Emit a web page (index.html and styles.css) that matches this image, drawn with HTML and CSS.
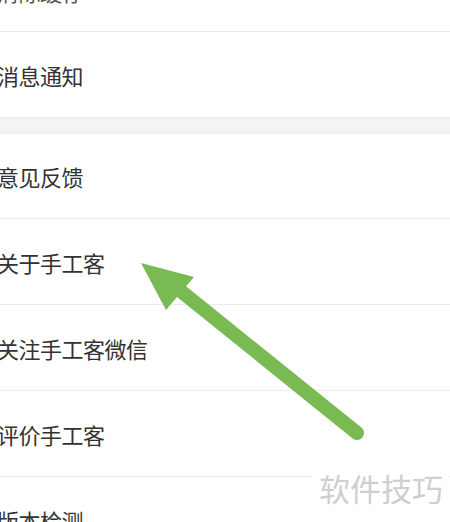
FILE: index.html
```html
<!DOCTYPE html>
<html lang="zh">
<head>
<meta charset="utf-8">
<link rel="stylesheet" href="styles.css">
</head>
<body>
<div class="page">
  <div class="row row-top">
    <span class="label">清除缓存</span>
    <span class="value">0.00M</span>
  </div>
  <div class="row">
    <span class="label">消息通知</span>
    <span class="chev"></span>
  </div>
  <div class="gap"></div>
  <div class="row">
    <span class="label">意见反馈</span>
    <span class="chev"></span>
  </div>
  <div class="row">
    <span class="label">关于手工客</span>
    <span class="chev"></span>
  </div>
  <div class="row">
    <span class="label">关注手工客微信</span>
    <span class="chev"></span>
  </div>
  <div class="row">
    <span class="label">评价手工客</span>
    <span class="chev"></span>
  </div>
  <div class="row row-last">
    <span class="label">版本检测</span>
    <span class="chev"></span>
  </div>

  <svg class="arrow" width="450" height="522" viewBox="0 0 450 522">
    <line x1="357" y1="433" x2="182" y2="292" stroke="#79bb52" stroke-width="14" stroke-linecap="round"/>
    <polygon points="141,263 194,277 166,310" fill="#79bb52"/>
  </svg>

  <div class="watermark">软件技巧</div>
</div>
</body>
</html>
```
FILE: styles.css
```css
html, body {
  margin: 0;
  padding: 0;
  background: #ffffff;
}
body {
  width: 450px;
  height: 522px;
  overflow: hidden;
  font-family: "Noto Sans CJK SC", "Noto Sans", sans-serif;
}
.page {
  position: relative;
  width: 450px;
  height: 522px;
  overflow: hidden;
}
.row {
  height: 85px;
  display: flex;
  align-items: center;
  justify-content: space-between;
  border-bottom: 1px solid #ebebeb;
  box-sizing: border-box;
  margin-left: -3px;
}
.row + .row {
  height: 86px;
}
.row-top {
  height: 82px;
  margin-top: -50px;
  align-items: center;
}
.row-top .label {
  color: #555;
}
.value {
  font-size: 19px;
  color: #999;
  margin-right: 6px;
}
.label {
  font-size: 22px;
  color: #333;
  letter-spacing: -0.5px;
  line-height: 1;
}
.chev {
  width: 9px;
  height: 9px;
  border-top: 1.5px solid #d6d6d6;
  border-right: 1.5px solid #d6d6d6;
  transform: rotate(45deg);
  margin-right: -9px;
}
.gap {
  height: 15px;
  background: #f4f4f4;
  border-bottom: 1px solid #ebebeb;
}
.row-last {
  border-bottom: none;
}
.arrow {
  position: absolute;
  left: 0;
  top: 0;
}
.watermark {
  position: absolute;
  left: 313px;
  top: 470px;
  padding: 0 6px 4px 6px;
  background: #ffffff;
  color: #cfcfcf;
  font-size: 31px;
  line-height: 36px;
  letter-spacing: 0;
}
```
